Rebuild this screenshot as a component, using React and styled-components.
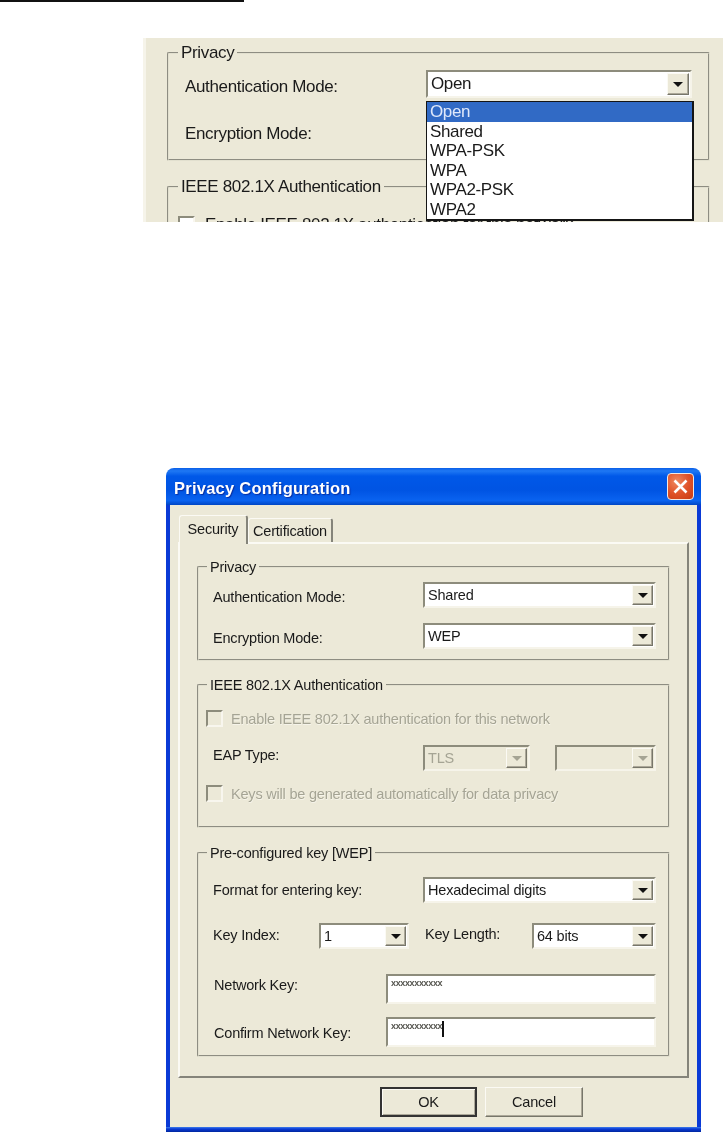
import React from "react";
import styled, { createGlobalStyle } from "styled-components";

const Global = createGlobalStyle`
  html, body { margin: 0; padding: 0; background: #fff; }
  body { font-family: "Liberation Sans", Arial, sans-serif; color: #1a1a1a; }
`;

const Page = styled.div`
  width: 723px;
  height: 1132px;
  overflow: hidden;
  display: flex;
  flex-direction: column;
  align-items: flex-start;
`;

const TopRule = styled.div`
  width: 244px;
  height: 2px;
  background: #111;
`;

const Snapshot = styled.section`
  width: 580px;
  height: 184px;
  margin: 36px 0 0 143px;
  padding: 5px 13px 0 21px;
  box-sizing: border-box;
  overflow: hidden;
  background: #ece9d8;
  border-left: 3px solid #f6f4ea;
  filter: blur(0.35px);
  font-size: 17px;
  letter-spacing: -0.35px;
`;

const Group = styled.fieldset`
  margin: ${(p) => p.$mt || 0}px 0 0;
  padding: ${(p) => p.$pt}px 0 ${(p) => p.$pb}px;
  border: 2px groove #e2e0cf;
  border-radius: 2px;
  min-width: 0;
`;

const Legend = styled.legend`
  margin-left: ${(p) => (p.$big ? 9 : 8)}px;
  padding: 0 3px;
  line-height: ${(p) => (p.$big ? 20 : 18)}px;
`;

const Row = styled.div`
  display: flex;
  align-items: center;
  margin-top: ${(p) => p.$mt || 0}px;
  padding-left: ${(p) => p.$pl ?? 14}px;
  height: ${(p) => p.$h}px;
`;

const Label = styled.span`
  width: ${(p) => p.$w}px;
  margin-left: ${(p) => p.$ml || 0}px;
  flex: none;
  position: relative;
  top: ${(p) => p.$dy || 0}px;
  white-space: nowrap;
`;

const ComboAnchor = styled.div`
  position: relative;
  flex: none;
`;

const ComboBox = styled.div`
  box-sizing: border-box;
  width: ${(p) => p.$w}px;
  height: ${(p) => p.$h}px;
  margin-left: ${(p) => p.$ml || 0}px;
  flex: none;
  display: flex;
  align-items: center;
  justify-content: space-between;
  padding: 1px 1px 1px 3px;
  border: 2px solid;
  border-color: #8d8c7c #f6f4ea #f6f4ea #8d8c7c;
  background: ${(p) => (p.$disabled ? "#ece9d8" : "#fff")};
  color: ${(p) => (p.$disabled ? "#a5a494" : "inherit")};
`;

const ComboText = styled.span`
  white-space: nowrap;
`;

const ArrowButton = styled.span`
  box-sizing: border-box;
  flex: none;
  width: ${(p) => (p.$big ? 22 : 21)}px;
  height: 100%;
  display: flex;
  align-items: center;
  justify-content: center;
  background: #ece9d8;
  border: 1px solid;
  border-color: #fbfaf4 #77766a #77766a #fbfaf4;
  box-shadow: inset -1px -1px 0 #aca899;
`;

const Arrow = styled.i`
  display: block;
  width: 0;
  height: 0;
  border-style: solid;
  border-width: 5px 5px 0;
  border-color: ${(p) => (p.$disabled ? "#a5a494" : "#111")} transparent transparent;
`;

const DropList = styled.ul`
  position: absolute;
  top: 31px;
  left: 0;
  box-sizing: border-box;
  width: 268px;
  height: 120px;
  margin: 0;
  padding: 0;
  list-style: none;
  background: #fff;
  border: 2px solid #151515;
  border-width: 1.5px 2px 2px 1.5px;
`;

const DropItem = styled.li`
  height: 19.4px;
  line-height: 19.4px;
  padding-left: 3px;
  ${(p) => p.$active && "background: #316ac5; color: #dfe8fa; height: 20px;"}
`;

const CheckMark = styled.span`
  box-sizing: border-box;
  display: block;
  flex: none;
  width: 17px;
  height: 17px;
  margin-right: ${(p) => p.$mr}px;
  border: 2px solid;
  border-color: #8d8c7c #f8f6ee #f8f6ee #8d8c7c;
  background: ${(p) => (p.$on ? "#fff" : "#ece9d8")};
`;

const MutedText = styled.span`
  color: #a5a494;
  white-space: nowrap;
  text-shadow: 0.5px 0.5px 0 #f6f4ea;
`;

const PlainText = styled.span`
  white-space: nowrap;
`;

const Window = styled.section`
  width: 535px;
  margin: 246px 0 0 166px;
  filter: blur(0.35px);
  font-size: 14.5px;
  letter-spacing: -0.2px;
  display: flex;
  flex-direction: column;
`;

const TitleBar = styled.header`
  box-sizing: border-box;
  height: 37px;
  padding: 0 7px 0 8px;
  display: flex;
  align-items: center;
  justify-content: space-between;
  border-radius: 8px 8px 0 0;
  background: linear-gradient(
    180deg,
    #0a5fe8 0%,
    #1f78f4 8%,
    #0058e8 22%,
    #0054e3 60%,
    #0a63f0 88%,
    #0046c4 100%
  );
`;

const Title = styled.h1`
  margin: 4px 0 0;
  font-size: 16.5px;
  font-weight: 700;
  letter-spacing: 0.25px;
  color: #fff;
  text-shadow: 1px 1px 1px #0a2fa0;
`;

const CloseButton = styled.button`
  box-sizing: border-box;
  width: 27px;
  height: 27px;
  padding: 0;
  display: flex;
  align-items: center;
  justify-content: center;
  border: 1.5px solid #f2e9e4;
  border-radius: 4px;
  background: radial-gradient(circle at 35% 30%, #ef8a62 0%, #e0532a 50%, #c73a12 100%);
`;

const Body = styled.div`
  display: flex;
  flex-direction: column;
  height: 622px;
  box-sizing: border-box;
  padding: 10px 8px 0;
  background: #ece9d8;
  border-style: solid;
  border-color: #0a3ad6;
  border-width: 0 4px;
`;

const BottomEdge = styled.div`
  height: 5px;
  background: linear-gradient(180deg, #3f7eea 0%, #0a3ad6 40%, #00279e 100%);
`;

const TabStrip = styled.nav`
  display: flex;
  align-items: flex-end;
  height: 27px;
  position: relative;
  z-index: 1;
  padding-left: 1px;
`;

const Tab = styled.span`
  box-sizing: border-box;
  display: flex;
  align-items: center;
  justify-content: center;
  flex: none;
  width: ${(p) => p.$w}px;
  height: ${(p) => (p.$active ? 29 : 24)}px;
  margin-bottom: ${(p) => (p.$active ? -2 : 0)}px;
  background: #ece9d8;
  border: solid #fbfaf4;
  border-width: 1px 2px 0 1px;
  border-right-color: #85847a;
  border-radius: 3px 3px 0 0;
  ${(p) => p.$active && "padding-bottom: 3px;"}
`;

const TabPanel = styled.div`
  box-sizing: border-box;
  height: 536px;
  padding: 14px 17px 0;
  background: #ece9d8;
  border: 2px solid;
  border-color: #fbfaf4 #85847a #85847a #fbfaf4;
`;

const TextField = styled.div`
  box-sizing: border-box;
  width: 270px;
  height: ${(p) => p.$h}px;
  flex: none;
  padding: 2px 3px;
  display: flex;
  align-items: flex-start;
  background: #fff;
  border: 2px solid;
  border-color: #8d8c7c #f6f4ea #f6f4ea #8d8c7c;
`;

const Masked = styled.span`
  font-size: 9px;
  line-height: 8px;
  font-weight: 700;
  letter-spacing: -0.35px;
  margin-top: 1px;
  color: #55554f;
`;

const Caret = styled.i`
  display: block;
  width: 1.5px;
  height: 16px;
  background: #111;
`;

const ButtonRow = styled.div`
  display: flex;
  gap: 8px;
  padding: 9px 0 0 202px;
`;

const DialogButton = styled.button`
  box-sizing: border-box;
  width: ${(p) => p.$w}px;
  height: 30px;
  padding: 0;
  font: inherit;
  letter-spacing: inherit;
  color: inherit;
  background: #ece9d8;
  border: ${(p) => (p.$default ? "2px" : "1px")} solid;
  border-color: ${(p) =>
    p.$default ? "#333 #333 #333 #333" : "#fbfaf4 #77766a #77766a #fbfaf4"};
  box-shadow: ${(p) =>
    p.$default
      ? "inset 1px 1px 0 #fbfaf4, inset -1px -1px 0 #aca899"
      : "inset -1px -1px 0 #aca899"};
`;

function Combo({ w, h = 26, ml, value, disabled, big }) {
  return (
    <ComboBox $w={w} $h={h} $ml={ml} $disabled={disabled}>
      <ComboText>{value}</ComboText>
      <ArrowButton $big={big}>
        <Arrow $disabled={disabled} />
      </ArrowButton>
    </ComboBox>
  );
}

const modes = ["Open", "Shared", "WPA-PSK", "WPA", "WPA2-PSK", "WPA2"];

export default function App() {
  return (
    <Page>
      <Global />
      <TopRule />

      <Snapshot>
        <Group $pt={7} $pb={14}>
          <Legend $big>Privacy</Legend>
          <Row $h={28} $pl={16}>
            <Label $w={241} $dy={3}>
              Authentication Mode:
            </Label>
            <ComboAnchor>
              <Combo w={266} h={28} big value="Open" />
              <DropList>
                {modes.map((m, i) => (
                  <DropItem key={m} $active={i === 0}>
                    {m}
                  </DropItem>
                ))}
              </DropList>
            </ComboAnchor>
          </Row>
          <Row $h={28} $mt={19} $pl={16}>
            <Label $w={241} $dy={3}>
              Encryption Mode:
            </Label>
          </Row>
        </Group>
        <Group $mt={16} $pt={19} $pb={10}>
          <Legend $big>IEEE 802.1X Authentication</Legend>
          <Row $h={17} $pl={9}>
            <CheckMark $mr={10} $on />
            <PlainText>Enable IEEE 802.1X authentication for this network</PlainText>
          </Row>
        </Group>
      </Snapshot>

      <Window>
        <TitleBar>
          <Title>Privacy Configuration</Title>
          <CloseButton aria-label="Close">
            <svg width="17" height="17" viewBox="0 0 17 17">
              <path
                d="M2.5 2.5 L14.5 14.5 M14.5 2.5 L2.5 14.5"
                stroke="#fff"
                strokeWidth="2.6"
                fill="none"
              />
            </svg>
          </CloseButton>
        </TitleBar>

        <Body>
          <TabStrip>
            <Tab $active $w={69}>
              Security
            </Tab>
            <Tab $w={85}>Certification</Tab>
          </TabStrip>

          <TabPanel>
            <Group $pt={6} $pb={10}>
              <Legend>Privacy</Legend>
              <Row $h={26}>
                <Label $w={210} $dy={2}>
                  Authentication Mode:
                </Label>
                <Combo w={233} value="Shared" />
              </Row>
              <Row $h={26} $mt={15}>
                <Label $w={210} $dy={2}>
                  Encryption Mode:
                </Label>
                <Combo w={233} value="WEP" />
              </Row>
            </Group>

            <Group $mt={15} $pt={16} $pb={24}>
              <Legend>IEEE 802.1X Authentication</Legend>
              <Row $h={17} $pl={7}>
                <CheckMark $mr={8} />
                <MutedText>Enable IEEE 802.1X authentication for this network</MutedText>
              </Row>
              <Row $h={26} $mt={18}>
                <Label $w={210} $dy={-3}>
                  EAP Type:
                </Label>
                <Combo w={107} value="TLS" disabled />
                <Combo w={101} ml={25} value="" disabled />
              </Row>
              <Row $h={17} $mt={14} $pl={7}>
                <CheckMark $mr={8} />
                <MutedText>Keys will be generated automatically for data privacy</MutedText>
              </Row>
            </Group>

            <Group $mt={16} $pt={15} $pb={8}>
              <Legend>Pre-configured key [WEP]</Legend>
              <Row $h={26}>
                <Label $w={210}>Format for entering key:</Label>
                <Combo w={233} value="Hexadecimal digits" />
              </Row>
              <Row $h={26} $mt={20}>
                <Label $w={106} $dy={-1}>
                  Key Index:
                </Label>
                <Combo w={90} value="1" />
                <Label $w={107} $ml={16} $dy={-2}>
                  Key Length:
                </Label>
                <Combo w={124} value="64 bits" />
              </Row>
              <Row $h={30} $mt={25} $pl={15}>
                <Label $w={172} $dy={-4}>
                  Network Key:
                </Label>
                <TextField $h={30}>
                  <Masked>xxxxxxxxxxx</Masked>
                </TextField>
              </Row>
              <Row $h={30} $mt={13} $pl={15}>
                <Label $w={172} $dy={1}>
                  Confirm Network Key:
                </Label>
                <TextField $h={30}>
                  <Masked>xxxxxxxxxxx</Masked>
                  <Caret />
                </TextField>
              </Row>
            </Group>
          </TabPanel>

          <ButtonRow>
            <DialogButton $default $w={97}>
              OK
            </DialogButton>
            <DialogButton $w={98}>Cancel</DialogButton>
          </ButtonRow>
        </Body>
        <BottomEdge />
      </Window>
    </Page>
  );
}
